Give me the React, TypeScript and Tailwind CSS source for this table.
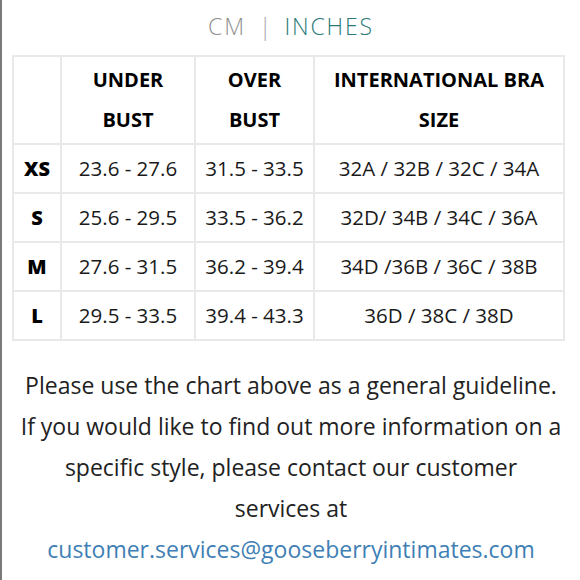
const rows = [
  { size: "XS", under: "23.6 - 27.6", over: "31.5 - 33.5", intl: "32A / 32B / 32C / 34A" },
  { size: "S", under: "25.6 - 29.5", over: "33.5 - 36.2", intl: "32D/ 34B / 34C / 36A" },
  { size: "M", under: "27.6 - 31.5", over: "36.2 - 39.4", intl: "34D /36B / 36C / 38B" },
  { size: "L", under: "29.5 - 33.5", over: "39.4 - 43.3", intl: "36D / 38C / 38D" },
];

const cell = "border-2 border-[#e9e9e9]";

export default function App() {
  return (
    <div
      className="w-[580px] h-[580px] bg-white border-l-2 border-[#7a7a7a] overflow-hidden text-[#1a1a1a]"
      style={{ fontFamily: "'Open Sans', Lato, sans-serif" }}
    >
      {/* unit toggle */}
      <div className="flex justify-center items-center gap-[13px] pt-[8px] h-[55px] pb-[10px] text-[23px] tracking-[0.08em] font-light">
        <span className="text-[#8f8f8f]">CM</span>
        <span className="text-[#a8a8a8] tracking-normal">|</span>
        <span className="text-[#2b7a78]">INCHES</span>
      </div>

      {/* size table */}
      <table className="ml-[10px] border-collapse border-2 border-[#e9e9e9] table-fixed w-[551px]">
        <colgroup>
          <col className="w-[48px]" />
          <col className="w-[134px]" />
          <col className="w-[119px]" />
          <col className="w-[250px]" />
        </colgroup>
        <thead>
          <tr className="h-[88px] text-[20px] leading-[40px] font-extrabold text-black">
            <th className={cell}></th>
            <th className={cell}>
              UNDER
              <br />
              BUST
            </th>
            <th className={cell}>
              OVER
              <br />
              BUST
            </th>
            <th className={`${cell} whitespace-nowrap`}>
              INTERNATIONAL BRA
              <br />
              SIZE
            </th>
          </tr>
        </thead>
        <tbody>
          {rows.map((r) => (
            <tr key={r.size} className="h-[49px] text-[20.5px] text-center">
              <td className={`${cell} font-extrabold text-[20px] text-black`}>{r.size}</td>
              <td className={cell}>{r.under}</td>
              <td className={cell}>{r.over}</td>
              <td className={`${cell} whitespace-nowrap`}>{r.intl}</td>
            </tr>
          ))}
        </tbody>
      </table>

      {/* guideline note */}
      <p className="mt-[24px] text-center text-[23px] leading-[41px] text-[#222] whitespace-nowrap">
        Please use the chart above as a general guideline.
        <br />
        If you would like to find out more information on a
        <br />
        specific style, please contact our customer
        <br />
        services at
        <br />
        <a className="text-[#3f7fb5]">customer.services@gooseberryintimates.com</a>
      </p>
    </div>
  );
}
